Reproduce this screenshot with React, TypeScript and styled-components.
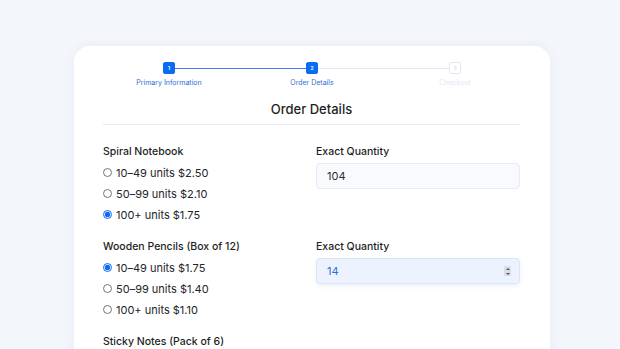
import styled, { createGlobalStyle } from "styled-components";

const GlobalStyle = createGlobalStyle`
  html, body {
    margin: 0;
    padding: 0;
    background: #f3f6fb;
    font-family: Inter, "Noto Sans", sans-serif;
    color: #1d1f24;
    overflow: hidden;
  }
`;

const Page = styled.div`
  width: 620px;
  height: 349px;
  padding-top: 46px;
  box-sizing: border-box;
  overflow: hidden;
`;

const Card = styled.div`
  width: 476px;
  margin-left: 74px;
  min-height: 340px;
  background: #ffffff;
  border-radius: 16px;
  box-shadow: 0 0 12px rgba(40, 70, 130, 0.05);
  padding: 16px 30px 0 29px;
  box-sizing: border-box;
`;

const Stepper = styled.div`
  display: grid;
  grid-template-columns: repeat(3, 143px);
  justify-content: center;
  margin-left: 1px;
`;

const Step = styled.div<{ $line?: "done" | "todo" }>`
  position: relative;
  display: flex;
  flex-direction: column;
  align-items: center;

  &::after {
    content: "";
    display: ${({ $line }) => ($line ? "block" : "none")};
    position: absolute;
    top: 5.5px;
    left: calc(50% + 6px);
    width: 131px;
    height: 1.5px;
    background: ${({ $line }) => ($line === "done" ? "#3d7cf0" : "#e1e9f8")};
  }
`;

const StepBox = styled.div<{ $active: boolean }>`
  width: 12px;
  height: 12px;
  border-radius: 2px;
  box-sizing: border-box;
  display: flex;
  align-items: center;
  justify-content: center;
  font-size: 5px;
  font-weight: 600;
  background: ${({ $active }) => ($active ? "#0b6cf2" : "#ffffff")};
  border: 1px solid ${({ $active }) => ($active ? "#0b6cf2" : "#e3e9f4")};
  color: ${({ $active }) => ($active ? "#ffffff" : "#d4dcea")};
`;

const StepLabel = styled.div<{ $active: boolean }>`
  margin-top: 4px;
  font-size: 7px;
  line-height: 9px;
  color: ${({ $active }) => ($active ? "#2f6ed8" : "#dfe7f4")};
  white-space: nowrap;
`;

const Title = styled.h2`
  margin: 13px 0 0;
  padding-bottom: 6px;
  font-size: 13px;
  line-height: 18px;
  font-weight: 500;
  text-align: center;
  border-bottom: 1px solid #e8ecf2;
`;

const Sections = styled.div`
  display: flex;
  flex-direction: column;
  gap: 15px;
  margin-top: 20px;
`;

const Product = styled.div`
  display: grid;
  grid-template-columns: 213px 1fr;
`;

const Column = styled.div`
  display: flex;
  flex-direction: column;
`;

const FieldLabel = styled.div`
  font-size: 10.5px;
  line-height: 14px;
  font-weight: 500;
  margin-bottom: 3px;
`;

const QtyLabel = styled(FieldLabel)`
  margin-bottom: 4px;
`;

const Option = styled.label`
  display: flex;
  align-items: center;
  gap: 4px;
  height: 21px;
  font-size: 11px;
  color: #22252b;
`;

const Radio = styled.input`
  width: 9px;
  height: 9px;
  margin: 0;
  accent-color: #0b6cf2;
`;

const InputBox = styled.div<{ $focused?: boolean }>`
  height: 26px;
  box-sizing: border-box;
  display: flex;
  align-items: center;
  justify-content: space-between;
  padding: 0 8px 0 10px;
  border-radius: 4px;
  border: 1px solid ${({ $focused }) => ($focused ? "#dbe5f8" : "#e6ebf5")};
  background: ${({ $focused }) => ($focused ? "#edf3fe" : "#f8fafd")};
  box-shadow: ${({ $focused }) => ($focused ? "0 2px 4px rgba(40,80,160,0.08)" : "none")};
  font-size: 11px;
  color: ${({ $focused }) => ($focused ? "#2f6ed8" : "#2b2e35")};
`;

const Spinner = styled.div`
  width: 7px;
  height: 10px;
  border-radius: 1px;
  background: #d9dde4;
  display: flex;
  flex-direction: column;
  align-items: center;
  justify-content: space-around;
`;

const Arrow = styled.div<{ $up: boolean }>`
  width: 0;
  height: 0;
  border-left: 2px solid transparent;
  border-right: 2px solid transparent;
  ${({ $up }) => ($up ? "border-bottom: 2px solid #555;" : "border-top: 2px solid #555;")}
`;

type ProductData = {
  name: string;
  options: string[];
  selected: number;
  qty?: string;
  focused?: boolean;
};

const products: ProductData[] = [
  {
    name: "Spiral Notebook",
    options: ["10–49 units $2.50", "50–99 units $2.10", "100+ units $1.75"],
    selected: 2,
    qty: "104",
  },
  {
    name: "Wooden Pencils (Box of 12)",
    options: ["10–49 units $1.75", "50–99 units $1.40", "100+ units $1.10"],
    selected: 0,
    qty: "14",
    focused: true,
  },
  {
    // the rest of this product lies below the fold
    name: "Sticky Notes (Pack of 6)",
    options: [],
    selected: -1,
  },
];

const steps = ["Primary Information", "Order Details", "Checkout"];

export default function App() {
  return (
    <Page>
      <GlobalStyle />
      <Card>
        <Stepper>
          {steps.map((s, i) => (
            <Step key={s} $line={i === 0 ? "done" : i === 1 ? "todo" : undefined}>
              <StepBox $active={i < 2}>{i + 1}</StepBox>
              <StepLabel $active={i < 2}>{s}</StepLabel>
            </Step>
          ))}
        </Stepper>
        <Title>Order Details</Title>
        <Sections>
          {products.map((p, pi) => (
            <Product key={p.name}>
              <Column>
                <FieldLabel>{p.name}</FieldLabel>
                {p.options.map((o, oi) => (
                  <Option key={o}>
                    <Radio
                      type="radio"
                      name={`p${pi}`}
                      defaultChecked={oi === p.selected}
                    />
                    {o}
                  </Option>
                ))}
              </Column>
              {p.qty && (
                <Column>
                  <QtyLabel>Exact Quantity</QtyLabel>
                  <InputBox $focused={p.focused}>
                    <span>{p.qty}</span>
                    {p.focused && (
                      <Spinner>
                        <Arrow $up />
                        <Arrow $up={false} />
                      </Spinner>
                    )}
                  </InputBox>
                </Column>
              )}
            </Product>
          ))}
        </Sections>
      </Card>
    </Page>
  );
}
